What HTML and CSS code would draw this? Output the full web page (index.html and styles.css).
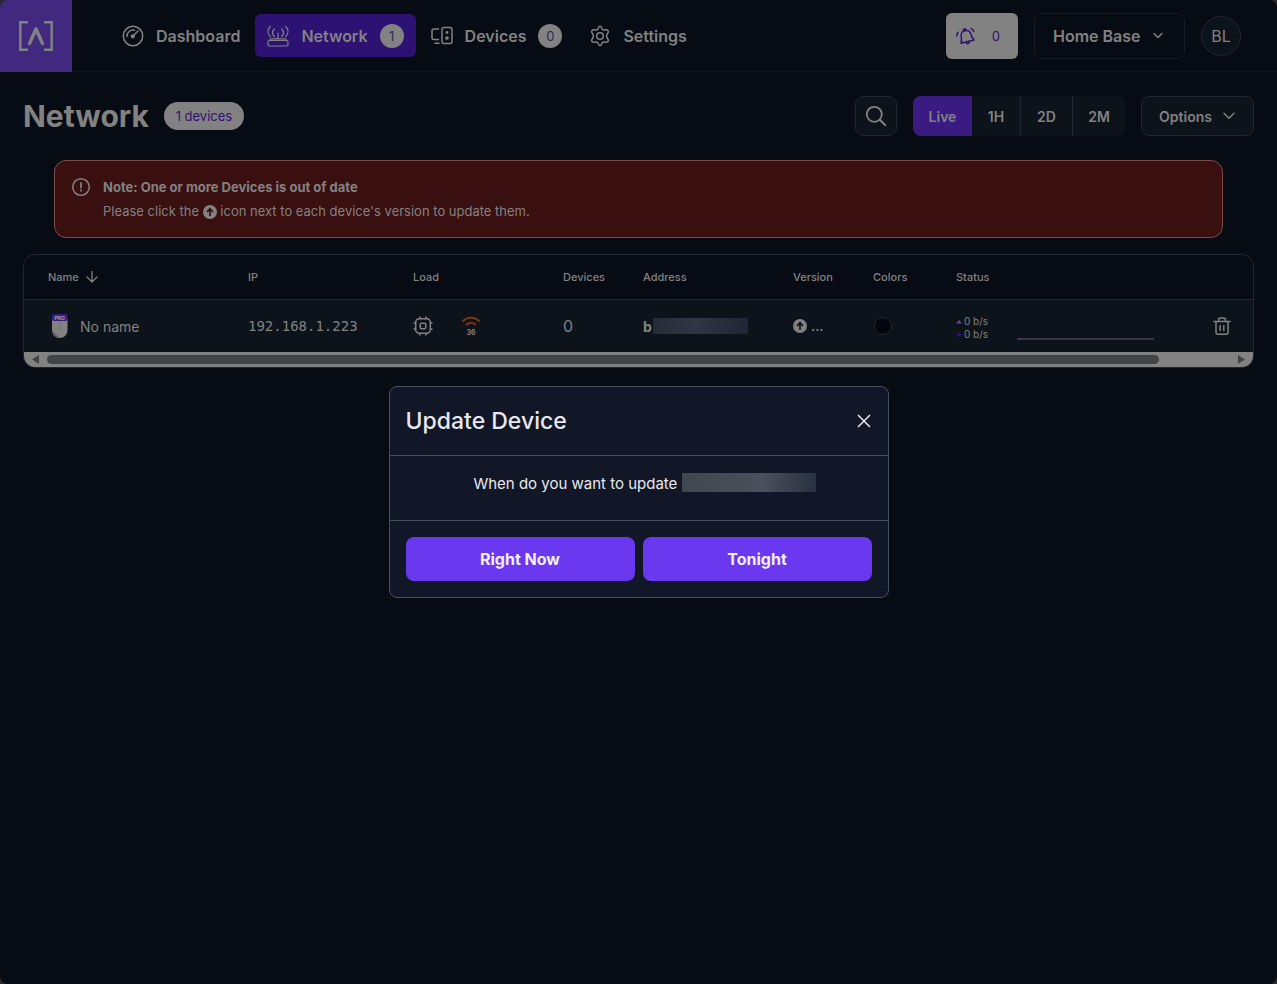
FILE: index.html
```html
<!DOCTYPE html>
<html lang="en">
<head>
<meta charset="utf-8">
<title>Network</title>
<link rel="stylesheet" href="styles.css">
</head>
<body>
<div class="page">
  <header class="topbar">
    <a class="logo" href="#" aria-label="Home">
      <svg width="36" height="32" viewBox="0 0 36 32" fill="none" stroke="currentColor" stroke-width="2.4"><path d="M10 2.300H2.300v27.400H10M26 2.300h7.700v27.400H26"/><path d="M11.500 23.500L18 9l6.500 14.500" stroke-width="3.400" stroke-linecap="round" stroke-linejoin="round"/></svg>
    </a>
    <nav class="nav">
      <a class="nav-item" href="#">
        <svg class="icon" width="22" height="22" viewBox="0 0 22 22"><circle cx="11" cy="11" r="9.700"/><path d="M5 11.500a6 6 0 0 1 7.500-6.200M12 10l4-4"/><circle cx="10.800" cy="11.300" r="1.400" fill="currentColor"/></svg>
        <span>Dashboard</span>
      </a>
      <a class="nav-item active" href="#">
        <svg class="icon thin" width="22" height="22" viewBox="0 0 22 22"><rect x="1" y="15.500" width="20" height="5.500" rx="1.500"/><path d="M2.500 15.500l1-1.700h15l1 1.700M11 13.500V8M3.300 1.500c-3 3-3 7 0 10M18.700 1.500c3 3 3 7 0 10M7.300 4c-2.200 2.300-2.200 5.200 0 7.500M14.700 4c2.200 2.300 2.200 5.200 0 7.500"/></svg>
        <span>Network</span>
        <span class="badge">1</span>
      </a>
      <a class="nav-item" href="#">
        <svg class="icon" width="22" height="22" viewBox="0 0 22 22"><path d="M7.500 4H3a2 2 0 0 0-2 2v6.500a2 2 0 0 0 2 2h4.500M4 18.200h4"/><rect x="11" y="2.500" width="10" height="16" rx="2"/><circle cx="16" cy="7.500" r=".7" fill="currentColor"/><circle cx="16" cy="13" r="1.100" fill="currentColor"/></svg>
        <span>Devices</span>
        <span class="badge">0</span>
      </a>
      <a class="nav-item" href="#">
        <svg class="icon" width="22" height="22" viewBox="0 0 22 22"><path d="M9.300 3.200C9.700 1.900 10.200 1.300 11 1.300s1.300.6 1.700 1.900c.5 1.300 1.600 2 3 1.700 1.400-.3 2.700-.4 3.400.8.700 1.200.2 2-.7 3-1 1.100-1 3.500 0 4.600.9 1 1.400 1.800.7 3-.7 1.200-2 1.100-3.400.8-1.400-.3-2.500.4-3 1.700-.4 1.300-.9 1.900-1.700 1.900s-1.300-.6-1.700-1.900c-.5-1.300-1.600-2-3-1.700-1.400.3-2.700.4-3.400-.8-.7-1.200-.2-2 .7-3 1-1.100 1-3.500 0-4.600-.9-1-1.400-1.800-.7-3 .7-1.200 2-1.100 3.400-.8 1.400.3 2.500-.4 3-1.700z"/><circle cx="11" cy="11" r="3.300"/></svg>
        <span>Settings</span>
      </a>
    </nav>
    <div class="account">
      <button class="alerts" type="button" aria-label="Notifications">
        <svg class="icon" width="18" height="18" viewBox="0 0 18 18"><g transform="rotate(-14 9.500 9.500)"><path d="M2.500 14.800h13.500c-1.300-1.800-1.600-3.300-1.600-6 0-3.200-2.200-5.300-5.100-5.300S4.200 5.600 4.200 8.800c0 2.700-.4 4.200-1.700 6zM7.800 3.600c0-2.600 3-2.600 3 0M7.600 15.300c.3 2 3.100 2 3.400 0"/></g><path d="M-.2 9c-.1-1.600.3-2.800 1.300-3.800M14.200 1.600c1.400.6 2.200 1.500 2.700 2.800"/></svg>
        <span>0</span>
      </button>
      <div class="site">
        <select aria-label="Site"><option>Home Base</option></select>
        <svg class="icon chevron" width="12" height="12" viewBox="0 0 12 12"><path d="M2 3.500l4 4 4-4"/></svg>
      </div>
      <button class="avatar" type="button">BL</button>
    </div>
  </header>

  <main class="content">
    <div class="heading">
      <h1>Network</h1>
      <span class="count">1 devices</span>
      <div class="tools">
        <button class="tool search" type="button" aria-label="Search">
          <svg class="icon" width="22" height="22" viewBox="0 0 22 22"><circle cx="9.300" cy="9.300" r="7.500" stroke-width="1.800"/><path d="M14.800 14.800l5.500 5.500" stroke-width="2"/></svg>
        </button>
        <div class="range">
          <button class="selected" type="button">Live</button>
          <button type="button">1H</button>
          <button type="button">2D</button>
          <button type="button">2M</button>
        </div>
        <button class="tool options" type="button">Options
          <svg class="icon" width="14" height="14" viewBox="0 0 14 14"><path d="M2 4.200l5 5 5-5"/></svg>
        </button>
      </div>
    </div>

    <section class="notice">
      <svg class="icon" width="20" height="20" viewBox="0 0 20 20"><circle cx="10" cy="10" r="8.300"/><path d="M10 6v4.500M10 13.200v.5" stroke-width="1.800"/></svg>
      <div>
        <strong>Note: One or more Devices is out of date</strong>
        <p>Please click the <svg class="up" width="14" height="14" viewBox="0 0 14 14"><circle cx="7" cy="7" r="7" fill="currentColor"/><path d="M7 11V3.800M4 6.800l3-3 3 3" fill="none" stroke="#3a0f10" stroke-width="1.700"/></svg> icon next to each device's version to update them.</p>
      </div>
    </section>

    <section class="panel">
      <table>
        <colgroup><col class="c-name"><col class="c-ip"><col class="c-load"><col class="c-devices"><col class="c-address"><col class="c-version"><col class="c-colors"><col class="c-status"><col><col class="c-action"></colgroup>
        <thead>
          <tr>
            <th>Name <svg class="icon sort" width="12" height="12" viewBox="0 0 12 12"><path d="M6 .5v10.500M1 6l5 5 5-5" stroke-width="1.300"/></svg></th>
            <th>IP</th><th>Load</th><th>Devices</th><th>Address</th><th>Version</th><th>Colors</th><th>Status</th><th></th><th></th>
          </tr>
        </thead>
        <tbody>
          <tr>
            <td><div class="device">
              <svg width="24" height="24" viewBox="0 0 24 24"><path d="M4 5h15.500v10.500c0 5.500-3.500 8.500-7.700 8.500S4 21 4 15.500z" fill="#828282"/><path d="M4 16l8 8C7.500 24 4 21 4 16z" fill="#626468"/><path d="M11.500 8v8" stroke="#707276"/><rect x="4" y="0" width="15.500" height="7" rx="2" fill="#3a1d80"/><text x="11.700" y="5.600" text-anchor="middle" class="pro">PRO</text></svg>
              <span>No name</span>
            </div></td>
            <td class="ip">192.168.1.223</td>
            <td><div class="load">
              <svg class="icon" width="20" height="20" viewBox="0 0 20 20"><rect x="2.700" y="2.700" width="14.600" height="14.600" rx="3.500"/><rect x="7.200" y="7.200" width="5.600" height="5.600" rx="1.500"/><path d="M7 2.500V1M13 2.500V1M7 19v-1.500M13 19v-1.500M2.500 7H1M2.500 13H1M19 7h-1.500M19 13h-1.500"/></svg>
              <svg width="20" height="20" viewBox="0 0 20 20" fill="none" stroke="#80370f" stroke-width="1.900"><path d="M1.500 5.500c5-5 12-5 17 0M5 9c3-3 7-3 10 0"/><text x="10" y="19" text-anchor="middle" class="signal">36</text></svg>
            </div></td>
            <td class="total">0</td>
            <td><div class="address"><b>b</b><span class="redacted"></span></div></td>
            <td><div class="version"><svg width="14" height="14" viewBox="0 0 14 14"><circle cx="7" cy="7" r="7" fill="currentColor"/><path d="M7 11V3.800M4 6.800l3-3 3 3" fill="none" stroke="#0c131b" stroke-width="1.700"/></svg><b>...</b></div></td>
            <td><span class="swatch"></span></td>
            <td><div class="rates">
              <span><svg width="6" height="4" viewBox="0 0 6 4"><path d="M0 3.500L3 0l3 3.500z" fill="#60508a"/></svg>0 b/s</span>
              <span><svg width="6" height="4" viewBox="0 0 6 4"><path d="M0 .5h6L3 4z" fill="#32167e"/></svg>0 b/s</span>
            </div></td>
            <td><svg class="chart" height="36" viewBox="0 0 137 36" preserveAspectRatio="none"><path d="M2 30.500h135" stroke="#38364a"/><path d="M0 31.500h137" stroke="#43208f"/><path d="M1 30.500h3" stroke="#6a3a8a"/></svg></td>
            <td><button class="trash" type="button" aria-label="Delete"><svg class="icon" width="20" height="20" viewBox="0 0 20 20"><path d="M2 5.500h16M4 5.500v10.800a2 2 0 0 0 2 2h8a2 2 0 0 0 2-2V5.500M6.500 5.500V4a2 2 0 0 1 2-2h3a2 2 0 0 1 2 2v1.500M8.200 9.500v5M11.800 9.500v5"/></svg></button></td>
          </tr>
        </tbody>
      </table>
      <div class="scrollbar">
        <svg width="7" height="9" viewBox="0 0 7 9"><path d="M7 0v9L0 4.500z"/></svg>
        <div class="track"><div class="thumb"></div></div>
        <svg width="7" height="9" viewBox="0 0 7 9"><path d="M0 0v9l7-4.500z"/></svg>
      </div>
    </section>
  </main>
</div>

<div class="overlay">
  <section class="dialog" role="dialog" aria-labelledby="dialog-title">
    <header class="dialog-head">
      <h2 id="dialog-title">Update Device</h2>
      <button class="close" type="button" aria-label="Close"><svg width="16" height="16" viewBox="0 0 16 16" fill="none" stroke="currentColor" stroke-width="1.500"><path d="M2 2l12 12M14 2L2 14"/></svg></button>
    </header>
    <p class="dialog-body">When do you want to update <span class="redacted"></span></p>
    <footer class="dialog-foot">
      <button type="button">Right Now</button>
      <button type="button">Tonight</button>
    </footer>
  </section>
</div>
</body>
</html>
```
FILE: styles.css
```css
* { box-sizing: border-box; }
html { background: #2b2b30; }
body {
  margin: 0;
  color: #828282;
  font-family: Inter, "Liberation Sans", sans-serif;
  font-size: 14px;
}
button, select { font: inherit; color: inherit; border: 0; padding: 0; background: none; cursor: pointer; }
a { color: inherit; text-decoration: none; }
h1, h2, p { margin: 0; }
svg { display: block; flex: none; }
.icon { fill: none; stroke: currentColor; stroke-width: 1.5; stroke-linecap: round; stroke-linejoin: round; }
.icon.thin { stroke-width: 1.2; }
.page { min-height: 100vh; background: #070b14; border-radius: 8px; overflow: hidden; }

.topbar { display: flex; align-items: center; height: 72px; padding-right: 36px; border-bottom: 1px solid #0e131c; }
.logo { display: grid; place-items: center; width: 72px; height: 72px; background: #41297f; }
.nav { display: flex; gap: 3px; margin-left: 38px; font-size: 16px; font-weight: 600; }
.nav-item { display: flex; align-items: center; gap: 12px; height: 43px; padding: 0 12px; border-radius: 6px; }
.nav-item.active { background: #2d1274; }
.badge { display: grid; place-items: center; width: 24px; height: 24px; border-radius: 12px; background: #828282; color: #2d2a50; font-size: 13px; font-weight: 400; }
.account { display: flex; align-items: center; gap: 16px; margin-left: auto; }
.alerts { display: flex; align-items: center; justify-content: space-between; width: 72px; height: 46px; padding: 0 18px 0 11px; border-radius: 6px; background: #828282; color: #2d1274; font-size: 13px; }
.alerts svg { overflow: visible; }
.site { position: relative; }
.site select { appearance: none; width: 151px; height: 46px; padding-left: 18px; border: 1px solid #151b27; border-radius: 8px; font-size: 16px; font-weight: 600; }
.chevron { position: absolute; right: 21px; top: 17px; pointer-events: none; }
.avatar { width: 40px; height: 40px; border: 1px solid #202732; border-radius: 50%; background: #0c131b; font-size: 16px; }

.content { padding: 24px 23px; }
.heading { display: flex; align-items: center; gap: 15px; height: 40px; }
h1 { font-size: 30px; font-weight: 700; }
.count { display: grid; place-items: center; width: 80px; height: 28px; border-radius: 14px; background: #828282; color: #2d1274; font-size: 13px; }
.tools { display: flex; gap: 16px; height: 40px; margin-left: auto; font-weight: 600; }
.tool { display: flex; align-items: center; justify-content: center; border: 1px solid #202732; border-radius: 8px; background: #0c131b; }
.search { width: 42px; }
.options { gap: 10px; width: 113px; }
.range { display: flex; border-radius: 8px; overflow: hidden; background: #0c131b; }
.range button { width: 52px; border-left: 1px solid #202732; }
.range button:nth-child(2) { width: 48px; border: 0; }
.range button:last-child { width: 53px; }
.range .selected { width: 59px; border: 0; background: #391b82; }

.notice { display: flex; gap: 12px; margin: 24px 31px 16px; padding: 14px 16px; border: 1px solid #7c4c48; border-radius: 12px; background: #3a0f10; line-height: 24px; }
.notice > svg { margin-top: 2px; }
.notice strong { display: block; font-size: 13px; font-weight: 700; }
.notice p { font-size: 13px; }
.up { display: inline-block; vertical-align: -3px; }

.panel { border: 1px solid #202732; border-radius: 12px; overflow: hidden; }
table { width: 100%; table-layout: fixed; border-collapse: separate; border-spacing: 0; }
th { height: 45px; padding: 0; border-bottom: 1px solid #202732; text-align: left; font-size: 11px; font-weight: 500; }
td { height: 52px; padding: 0; background: #0c131b; }
th:first-child, td:first-child { padding-left: 24px; }
.sort { display: inline-block; margin-left: 4px; vertical-align: -2px; }
.c-name { width: 224px; }
.c-ip { width: 165px; }
.c-load, .c-address { width: 150px; }
.c-devices, .c-version { width: 80px; }
.c-colors { width: 83px; }
.c-status { width: 61px; }
.c-action { width: 41px; }
.device, .load, .address, .version { display: flex; align-items: center; }
.device { gap: 8px; }
.pro { fill: #a0a0a8; font-size: 5px; font-weight: 700; }
.ip { font-family: "DejaVu Sans Mono", monospace; }
.load { gap: 28px; }
.signal { fill: #828282; stroke: none; font-size: 7px; font-weight: 700; }
.total { font-size: 16px; }
.redacted { display: inline-block; background: linear-gradient(90deg, #252b36, #303744 45%, #202633); }
.address { gap: 1px; }
.address .redacted { width: 95px; height: 16px; }
.version { gap: 4px; }
.version b { font-weight: 600; font-size: 13px; }
.swatch { display: block; width: 18px; height: 18px; margin-left: 1px; border: 1px solid #202732; border-radius: 50%; background: #03060e; }
.rates { display: grid; padding-top: 4px; font-size: 10px; line-height: 13px; }
.rates span { display: flex; align-items: center; gap: 2px; }
.chart { width: 137px; max-width: 100%; }
.trash { display: block; }
.scrollbar { display: flex; align-items: center; gap: 8px; height: 15px; padding: 0 8px; background: #828282; fill: #434446; }
.track { flex: 1; }
.thumb { width: 94%; height: 9px; border-radius: 5px; background: #434446; }

.overlay { position: fixed; inset: 0; display: grid; place-items: center; padding: 16px; }
.dialog { width: 500px; max-width: 100%; border: 1px solid #465062; border-radius: 8px; background: #111726; color: #e8e8f0; font-size: 16px; }
.dialog-head { display: flex; align-items: center; justify-content: space-between; height: 69px; padding: 0 16px; border-bottom: 1px solid #465062; }
h2 { font-size: 23px; font-weight: 500; }
.dialog-body { height: 65px; padding: 16px 16px 16px 28px; border-bottom: 1px solid #465062; font-size: 15px; line-height: 24px; text-align: center; }
.dialog-body .redacted { width: 134px; height: 19px; vertical-align: -3px; background: linear-gradient(90deg, #414750, #4a505b 60%, #293040); }
.dialog-foot { display: grid; grid-template-columns: 1fr 1fr; gap: 8px; padding: 16px; }
.dialog-foot button { height: 44px; border-radius: 8px; background: #6938ef; color: #f2efff; font-weight: 700; }
```
